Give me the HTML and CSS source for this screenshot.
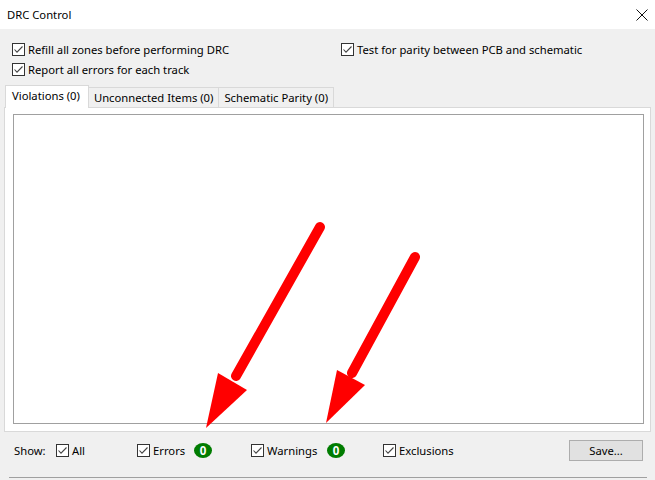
FILE: index.html
```html
<!DOCTYPE html>
<html>
<head>
<meta charset="utf-8">
<link rel="stylesheet" href="styles.css">
</head>
<body>
<div class="win">
  <div class="titlebar">
    <span class="title">DRC Control</span>
    <svg class="close" width="12" height="12" viewBox="0 0 12 12"><path d="M0.5 0.5 L11.5 11.5 M11.5 0.5 L0.5 11.5" stroke="#111" stroke-width="1" fill="none"/></svg>
  </div>
  <div class="options">
    <label class="cb"><span class="box"><svg viewBox="0 0 13 13"><path d="M2.5 6.5 L5 9.2 L10.5 3.5" stroke="#444" stroke-width="1.1" fill="none"/></svg></span>Refill all zones before performing DRC</label>
    <label class="cb"><span class="box"><svg viewBox="0 0 13 13"><path d="M2.5 6.5 L5 9.2 L10.5 3.5" stroke="#444" stroke-width="1.1" fill="none"/></svg></span>Test for parity between PCB and schematic</label>
    <label class="cb"><span class="box"><svg viewBox="0 0 13 13"><path d="M2.5 6.5 L5 9.2 L10.5 3.5" stroke="#444" stroke-width="1.1" fill="none"/></svg></span>Report all errors for each track</label>
  </div>
  <div class="tabs">
    <div class="tab active">Violations (0)</div>
    <div class="tab">Unconnected Items (0)</div>
    <div class="tab">Schematic Parity (0)</div>
  </div>
  <div class="panel">
    <div class="list"></div>
  </div>
  <div class="bottom">
    <span class="show">Show:</span>
    <label class="cb w-all"><span class="box"><svg viewBox="0 0 13 13"><path d="M2.5 6.5 L5 9.2 L10.5 3.5" stroke="#444" stroke-width="1.1" fill="none"/></svg></span>All</label>
    <label class="cb w-err"><span class="box"><svg viewBox="0 0 13 13"><path d="M2.5 6.5 L5 9.2 L10.5 3.5" stroke="#444" stroke-width="1.1" fill="none"/></svg></span>Errors</label>
    <span class="badge b-err">0</span>
    <label class="cb w-warn"><span class="box"><svg viewBox="0 0 13 13"><path d="M2.5 6.5 L5 9.2 L10.5 3.5" stroke="#444" stroke-width="1.1" fill="none"/></svg></span>Warnings</label>
    <span class="badge b-warn">0</span>
    <label class="cb w-excl"><span class="box"><svg viewBox="0 0 13 13"><path d="M2.5 6.5 L5 9.2 L10.5 3.5" stroke="#444" stroke-width="1.1" fill="none"/></svg></span>Exclusions</label>
    <button class="save">Save...</button>
  </div>
  <div class="sep"></div>
  <svg class="arrows" width="655" height="480" viewBox="0 0 655 480">
    <line x1="320" y1="227" x2="236" y2="376" stroke="#ff0000" stroke-width="10" stroke-linecap="round"/>
    <polygon points="218,373 247,390 206,428" fill="#ff0000"/>
    <line x1="415" y1="257" x2="352" y2="373" stroke="#ff0000" stroke-width="10" stroke-linecap="round"/>
    <polygon points="337,370 365,385 326,423" fill="#ff0000"/>
  </svg>
</div>
</body>
</html>
```
FILE: styles.css
```css
* { box-sizing: border-box; }
html, body { margin: 0; padding: 0; }
body {
  width: 655px;
  height: 480px;
  overflow: hidden;
  background: #f0f0f0;
  font-family: "Segoe UI", "Noto Sans", "Liberation Sans", sans-serif;
  font-size: 11.25px;
  color: #000;
}
.win { position: relative; width: 655px; height: 480px; }
.titlebar {
  height: 29px;
  background: #fff;
  display: flex;
  align-items: center;
  justify-content: space-between;
  padding: 0 7px 0 7px;
}
.title { margin-top: -1px; }
.options {
  display: grid;
  grid-template-columns: 329px auto;
  grid-auto-rows: 20px;
  padding: 10px 0 0 12px;
  height: 56px;
}
.cb {
  display: flex;
  align-items: center;
  white-space: nowrap;
}
.box {
  width: 13px;
  height: 13px;
  border: 1px solid #333;
  background: #fff;
  margin-right: 3px;
  display: inline-block;
  flex: none;
}
.box svg { display: block; width: 13px; height: 13px; margin: -1px; }
.tabs {
  display: flex;
  align-items: flex-end;
  padding-left: 5px;
  height: 22px;
  position: relative;
  z-index: 1;
}
.tab {
  height: 20px;
  border: 1px solid #d9d9d9;
  border-bottom: none;
  background: #f0f0f0;
  padding: 0 5px 0 5px;
  line-height: 19px;
  margin-left: -1px;
}
.tab:first-child { margin-left: 0; }
.tab.active {
  height: 23px;
  background: #fff;
  padding: 0 8px 0 6px;
  line-height: 19px;
  margin-bottom: -1px;
  z-index: 2;
  position: relative;
}
.panel {
  margin-left: 4px;
  width: 647px;
  height: 325px;
  border: 1px solid #d9d9d9;
  background: #fff;
  padding: 6px 0 0 8px;
}
.list {
  width: 631px;
  height: 310px;
  border: 1px solid #a0a0a0;
  background: #fff;
}
.bottom {
  display: flex;
  align-items: center;
  height: 22px;
  margin-top: 7px;
  padding-left: 14px;
}
.show { width: 42px; }
.w-all { width: 81px; }
.w-err { width: 57px; }
.w-warn { width: 76px; }
.w-excl { width: 186px; }
.badge {
  width: 18px;
  height: 15px;
  border-radius: 50%;
  background: #007c00;
  color: #fff;
  font-weight: bold;
  font-size: 11.5px;
  line-height: 15px;
  text-align: center;
  flex: none;
}
.b-err { margin-right: 39px; }
.b-warn { margin-right: 38px; }
.save {
  width: 74px;
  height: 21px;
  background: #e1e1e1;
  border: 1px solid #adadad;
  font: inherit;
  padding: 0;
  color: #000;
}
.sep {
  margin: 16px 0 0 9px;
  width: 638px;
  height: 1px;
  background: #a0a0a0;
}
.arrows { position: absolute; left: 0; top: 0; pointer-events: none; }
```
